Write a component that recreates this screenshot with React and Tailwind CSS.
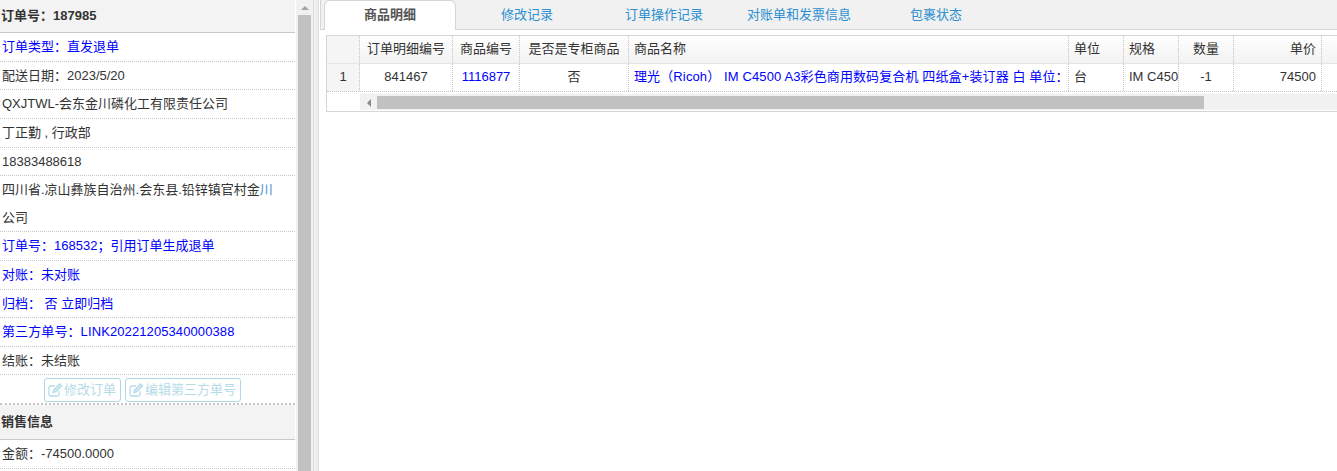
import React from "react";

function Row({ children, blue, h = "h-[29px]", leading = "leading-[28px]" }) {
  return (
    <div className={`${h} ${leading} pl-[2px] border-b border-dotted border-[#c4c4c4] whitespace-nowrap ${blue ? "text-[#0000ff]" : "text-[#333333]"}`}>
      {children}
    </div>
  );
}

function Head({ children, h }) {
  return (
    <div className={`${h} pl-[1px] bg-[#f3f3f3] font-bold text-[#333333] flex items-center border-b border-[#c8c8c8]`}>
      {children}
    </div>
  );
}

function EditIcon() {
  return (
    <svg width="15" height="14" viewBox="0 0 15 14" fill="none" stroke="#b5dbe8" strokeWidth="1.3" className="shrink-0">
      <path d="M11 8v3.5a1.5 1.5 0 0 1-1.5 1.5h-7A1.5 1.5 0 0 1 1 11.500v-7A1.500 1.500 0 0 1 2.500 3H7" />
      <path d="M5 9.500l.6-2.500 6-6 2 2-6 6z" fill="#d5ecf3" />
    </svg>
  );
}

function Btn({ children, w }) {
  return (
    <div className={`${w} h-[24px] flex items-center justify-center gap-[1px] rounded-[3px] border border-[#add8e6] text-[#b5dbe8] text-[13px] bg-white`}>
      <EditIcon />
      <span>{children}</span>
    </div>
  );
}

const cols = [
  { w: "w-[33px]", head: "", cell: "1", cls: "text-center bg-[#f5f5f5]", headCls: "" },
  { w: "w-[93px]", head: "订单明细编号", cell: "841467", cls: "text-center", headCls: "text-center" },
  { w: "w-[67px]", head: "商品编号", cell: "1116877", cls: "text-center text-[#0000ff]", headCls: "text-center" },
  { w: "w-[109px]", head: "是否是专柜商品", cell: "否", cls: "text-center", headCls: "text-center" },
  { w: "w-[440px]", head: "商品名称", cell: "理光（Ricoh） IM C4500 A3彩色商用数码复合机 四纸盒+装订器 白 单位：", cls: "text-left pl-[5px] tracking-[0.12px] text-[#0000ff]", headCls: "text-left pl-[5px]" },
  { w: "w-[55px]", head: "单位", cell: "台", cls: "text-left pl-[5px]", headCls: "text-left pl-[5px]" },
  { w: "w-[55px]", head: "规格", cell: "IM C4500", cls: "text-left pl-[5px]", headCls: "text-left pl-[5px]" },
  { w: "w-[55px]", head: "数量", cell: "-1", cls: "text-center", headCls: "text-center" },
  { w: "w-[88px]", head: "单价", cell: "74500", cls: "text-right pr-[5px]", headCls: "text-right pr-[5px]" },
  { w: "w-[16px]", head: "", cell: "", cls: "", headCls: "" },
];

export default function App() {
  return (
    <div
      className="w-[1337px] h-[471px] overflow-hidden flex bg-white text-[13px] text-[#333333]"
      style={{ fontFamily: '"Liberation Sans", "Noto Sans CJK SC", sans-serif' }}
    >
      {/* Left panel */}
      <div className="w-[295px] shrink-0 overflow-hidden">
        <Head h="h-[33px]">订单号：187985</Head>
        <Row blue h="h-[29px]">订单类型：直发退单</Row>
        <Row h="h-[28px]">配送日期：2023/5/20</Row>
        <Row>QXJTWL-会东金川磷化工有限责任公司</Row>
        <Row>丁正勤 , 行政部</Row>
        <Row h="h-[28px]">18383488618</Row>
        <div className="h-[56px] pl-[2px] leading-[28px] border-b border-dotted border-[#c4c4c4] overflow-hidden whitespace-nowrap">
          四川省.凉山彝族自治州.会东县.铅锌镇官村金<span className="text-[#4a90d9]">川</span>
          <br />
          公司
        </div>
        <Row blue>订单号：168532；引用订单生成退单</Row>
        <Row blue>对账：未对账</Row>
        <Row blue h="h-[28px]">归档： 否 立即归档</Row>
        <Row blue><span className="tracking-[0.1px]">第三方单号：LINK20221205340000388</span></Row>
        <Row h="h-[28px]">结账：未结账</Row>
        <div className="h-[30px] flex items-start justify-center gap-[4px] pt-[3px] pr-[11px] border-b-2 border-dotted border-[#c4c4c4]">
          <Btn w="w-[77px]">修改订单</Btn>
          <Btn w="w-[116px]">编辑第三方单号</Btn>
        </div>
        <Head h="h-[35px]">销售信息</Head>
        <Row>金额：-74500.0000</Row>
      </div>

      {/* Scrollbar */}
      <div className="w-[17px] shrink-0 ml-[1px] px-[2px] bg-[#f1f1f1] flex flex-col items-center">
        <div className="h-[15px] w-full flex items-center justify-center">
          <div className="w-0 h-0 border-x-[4px] border-x-transparent border-b-[4px] border-b-[#a3a3a3]" />
        </div>
        <div className="flex-1 w-full bg-[#c1c1c1]" />
      </div>

      {/* Splitter */}
      <div className="w-[6px] shrink-0 bg-[#efefef] border-x border-[#dddddd]" />

      {/* Right */}
      <div className="flex-1 min-w-0 pl-[1px]">
        <div className="h-[30px] bg-[#f1f1f1] border-l border-b border-[#d5d5d5] flex pl-[3px]">
          <div className="w-[132px] h-[30px] bg-white border border-b-0 border-[#d5d5d5] rounded-t-[6px] text-center leading-[28px] text-[#555555] font-bold">
            商品明细
          </div>
          <div className="w-[142px] text-center leading-[29px] text-[#2b8fd0]">修改记录</div>
          <div className="w-[132px] text-center leading-[29px] text-[#2b8fd0]">订单操作记录</div>
          <div className="w-[138px] text-center leading-[29px] text-[#2b8fd0]">对账单和发票信息</div>
          <div className="w-[136px] text-center leading-[29px] text-[#2b8fd0]">包裹状态</div>
        </div>

        <div className="mt-[5px] ml-[6px] border-y border-l border-[#d5d5d5] h-[77px] overflow-hidden">
          <div className="flex h-[28px] bg-gradient-to-b from-white to-[#f2f2f2] border-b border-[#e5e5e5]">
            {cols.map((c, i) => (
              <div
                key={i}
                className={`${c.w} shrink-0 leading-[26px] text-[#333333] whitespace-nowrap overflow-hidden ${c.headCls} ${i < cols.length - 1 ? "border-r border-dotted border-[#c4c4c4]" : ""} ${i === 0 ? "bg-[#f5f5f5]" : ""}`}
              >
                {c.head}
              </div>
            ))}
          </div>
          <div className="flex h-[28px] border-b border-dotted border-[#c4c4c4]">
            {cols.map((c, i) => (
              <div
                key={i}
                className={`${c.w} shrink-0 leading-[26px] whitespace-nowrap overflow-hidden ${c.cls} ${i < cols.length - 1 ? "border-r border-dotted border-[#c4c4c4]" : ""}`}
              >
                {c.cell}
              </div>
            ))}
          </div>
          <div className="flex mt-[2px] h-[16px]">
            <div className="w-[33px] shrink-0" />
            <div className="flex-1 flex bg-[#f1f1f1] pt-[2px]">
              <div className="w-[17px] h-[13px] shrink-0 flex items-center justify-center">
                <div className="w-0 h-0 border-y-[4px] border-y-transparent border-r-[4px] border-r-[#8a8a8a]" />
              </div>
              <div className="w-[827px] h-[13px] bg-[#c1c1c1]" />
            </div>
          </div>
        </div>
      </div>
    </div>
  );
}
